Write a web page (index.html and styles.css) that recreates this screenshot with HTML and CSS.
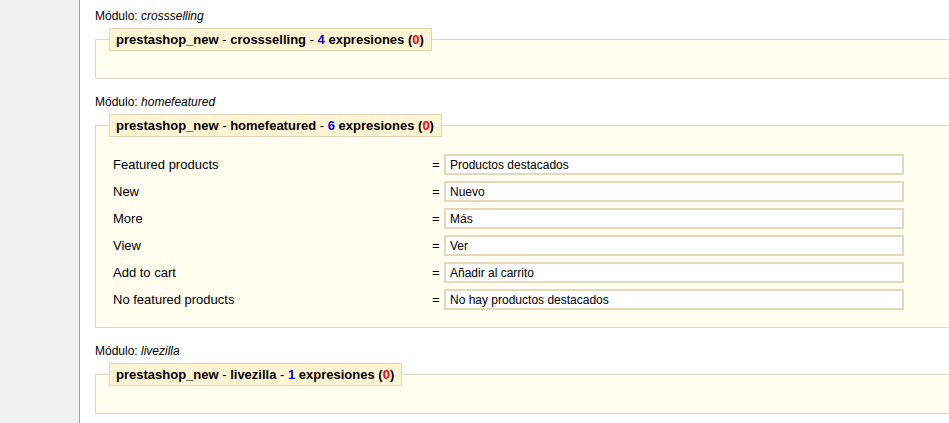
FILE: index.html
```html
<!DOCTYPE html>
<html lang="es">
<head>
<meta charset="utf-8">
<title>Traducciones de módulos</title>
<link rel="stylesheet" href="styles.css">
</head>
<body>
<div class="page">
  <aside class="sidebar"></aside>
  <main class="main">
    <section class="module">
      <div class="module-title">Módulo: <i>crossselling</i></div>
      <fieldset class="box">
        <legend class="box-legend"><b>prestashop_new</b> - <b>crossselling</b> - <b class="num">4</b> <b>expresiones (<span class="err">0</span>)</b></legend>
      </fieldset>
    </section>

    <section class="module">
      <div class="module-title">Módulo: <i>homefeatured</i></div>
      <fieldset class="box">
        <legend class="box-legend"><b>prestashop_new</b> - <b>homefeatured</b> - <b class="num">6</b> <b>expresiones (<span class="err">0</span>)</b></legend>
        <div class="rows">
          <div class="label">Featured products</div><div class="eq">=</div><input class="field" type="text" value="Productos destacados">
          <div class="label">New</div><div class="eq">=</div><input class="field" type="text" value="Nuevo">
          <div class="label">More</div><div class="eq">=</div><input class="field" type="text" value="Más">
          <div class="label">View</div><div class="eq">=</div><input class="field" type="text" value="Ver">
          <div class="label">Add to cart</div><div class="eq">=</div><input class="field" type="text" value="Añadir al carrito">
          <div class="label">No featured products</div><div class="eq">=</div><input class="field" type="text" value="No hay productos destacados">
        </div>
      </fieldset>
    </section>

    <section class="module">
      <div class="module-title">Módulo: <i>livezilla</i></div>
      <fieldset class="box">
        <legend class="box-legend"><b>prestashop_new</b> - <b>livezilla</b> - <b class="num">1</b> <b>expresiones (<span class="err">0</span>)</b></legend>
      </fieldset>
    </section>
  </main>
</div>
</body>
</html>
```

FILE: styles.css
```css
html, body {
  margin: 0;
  padding: 0;
  background: #ffffff;
  overflow: hidden;
}

body {
  font-family: "Liberation Sans", Arial, sans-serif;
  color: #000000;
}

.page {
  display: flex;
  min-height: 100vh;
}

.sidebar {
  width: 79px;
  flex: 0 0 79px;
  background: #f0f0f0;
  border-right: 1px solid #a0a0a0;
}

.main {
  flex: 1;
  padding: 9px 0 0 15px;
  min-width: 0;
}

.module {
  margin-bottom: 16px;
}

.module-title {
  font-size: 12px;
  line-height: 14px;
  margin-bottom: 5px;
  color: #000;
}

.box {
  margin: 0;
  border: 1px solid #dfd6c4;
  border-right: 0;
  background: #fffff0;
  padding: 14px 0 13px 13px;
  min-inline-size: 0;
}

.box-legend {
  font-size: 13px;
  line-height: 15px;
  padding: 3px 7px 3px 6px;
  border: 1px solid #e2d5b6;
  background: #fff5d4;
  color: #000;
  font-weight: normal;
}

.box-legend b {
  font-weight: bold;
}

.num {
  color: #0000ee;
}

.err {
  color: #ff0000;
}

.rows {
  display: grid;
  grid-template-columns: 320px 12px 460px;
  grid-auto-rows: 27px;
  align-items: center;
  margin-left: 3px;
  margin-bottom: 1px;
}

.label {
  font-size: 13px;
  line-height: 27px;
  padding-left: 1px;
}

.eq {
  font-size: 13px;
  line-height: 27px;
}

.field {
  box-sizing: border-box;
  width: 460px;
  height: 21px;
  margin: 0;
  border: 2px solid #e4d7bb;
  padding: 0 4px;
  background: #ffffff;
  font-family: "Liberation Sans", Arial, sans-serif;
  font-size: 12px;
  color: #000;
  outline: none;
}
```
